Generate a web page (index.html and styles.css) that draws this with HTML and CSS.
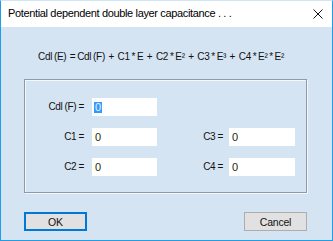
FILE: index.html
```html
<!DOCTYPE html>
<html>
<head>
<meta charset="utf-8">
<link rel="stylesheet" href="styles.css">
</head>
<body>
<div class="window">
  <div class="titlebar">
    <span class="title">Potential dependent double layer capacitance . . .</span>
    <svg class="close" width="10" height="10" viewBox="0 0 10 10"><path d="M0.5 0.5 L9.5 9.5 M9.5 0.5 L0.5 9.5" stroke="#111" stroke-width="1" fill="none"/></svg>
  </div>
  <div class="content">
    <div class="formula">Cdl (E)  = Cdl (F)  +  C1 * E  +  C2 * E²  +  C3 * E³  +  C4 * E² * E²</div>
    <div class="group">
      <div class="grid">
        <label class="lbl l1">Cdl (F) =</label>
        <div class="input"><span class="sel">0</span></div>
        <span></span><span></span>
        <label class="lbl l1">C1 =</label>
        <div class="input">0</div>
        <label class="lbl l2">C3 =</label>
        <div class="input">0</div>
        <label class="lbl l1">C2 =</label>
        <div class="input">0</div>
        <label class="lbl l2">C4 =</label>
        <div class="input">0</div>
      </div>
    </div>
    <div class="buttons">
      <div class="btn default">OK</div>
      <div class="btn">Cancel</div>
    </div>
  </div>
</div>
</body>
</html>
```
FILE: styles.css
```css
html, body {
  margin: 0;
  padding: 0;
}
body {
  width: 333px;
  height: 241px;
  overflow: hidden;
  font-family: "Liberation Sans", Arial, sans-serif;
}
.window {
  box-sizing: border-box;
  width: 333px;
  height: 241px;
  border: 1px solid #1a9fe8;
  border-top-color: #cfe6f7;
  background: #d5e4f2;
  display: flex;
  flex-direction: column;
}
.titlebar {
  height: 26px;
  background: #fff;
  display: flex;
  align-items: center;
  justify-content: space-between;
  padding: 0 9px 0 7px;
}
.title {
  font-family: "Liberation Sans", Arial, sans-serif;
  font-size: 11px;
  letter-spacing: -0.35px;
  color: #000;
  position: relative;
  top: -1px;
}
.close {
  display: block;
}
.content {
  display: flex;
  flex-direction: column;
  padding: 23px 0 0 23px;
}
.formula {
  font-size: 10px;
  letter-spacing: -0.3px;
  word-spacing: -0.7px;
  line-height: 14px;
  color: #111;
  padding-left: 14px;
  white-space: pre;
}
.group {
  margin-top: 15px;
  width: 283px;
  height: 114px;
  box-sizing: border-box;
  border: 1px solid #8e9aa6;
  box-shadow: 1px 1px 0 #f4f8fc, inset 1px 1px 0 #f4f8fc;
  padding-top: 18px;
}
.grid {
  display: grid;
  grid-template-columns: 67px 65px 72px 66px;
  grid-auto-rows: 18px;
  row-gap: 12px;
}
.lbl {
  font-size: 10px;
  letter-spacing: -0.4px;
  color: #111;
  text-align: right;
  line-height: 18px;
  white-space: nowrap;
}
.l1 { padding-right: 8px; }
.l2 { padding-right: 6px; }
.input {
  background: #fff;
  font-size: 11px;
  line-height: 18px;
  padding-left: 3px;
  color: #2a1e08;
}
.sel {
  background: #3399ff;
  color: #e8f2ff;
  display: inline-block;
  line-height: 11px;
  padding: 0 1px;
  margin-left: -1px;
}
.buttons {
  display: flex;
  justify-content: space-between;
  width: 283px;
  margin-top: 19px;
}
.btn {
  box-sizing: border-box;
  width: 63px;
  height: 19px;
  border: 1px solid #adadad;
  background: #e1e1e1;
  font-size: 10.5px;
  letter-spacing: -0.2px;
  color: #111;
  display: flex;
  align-items: center;
  justify-content: center;
}
.btn.default {
  border: 2px solid #0078d7;
}
```
